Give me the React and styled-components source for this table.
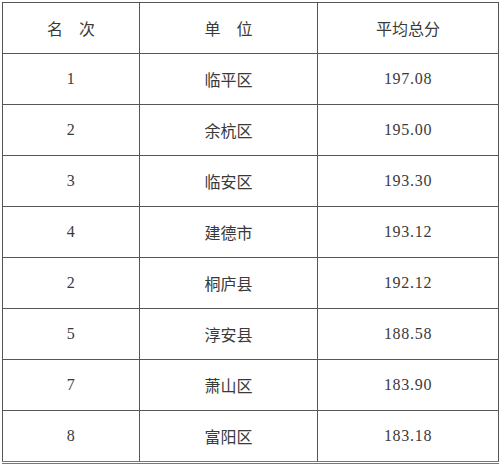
import styled, {createGlobalStyle} from "styled-components";

const rows = [
  ["1", "临平区", "197.08"],
  ["2", "余杭区", "195.00"],
  ["3", "临安区", "193.30"],
  ["4", "建德市", "193.12"],
  ["2", "桐庐县", "192.12"],
  ["5", "淳安县", "188.58"],
  ["7", "萧山区", "183.90"],
  ["8", "富阳区", "183.18"],
];

export default function App() {
  return (
    <>
      <GlobalStyle />
      <Page>
        <Table>
          <colgroup>
            <col style={{width: 137}} />
            <col style={{width: 178}} />
            <col style={{width: 181}} />
          </colgroup>
          <thead>
            <tr>
              <HeadCell>名　次</HeadCell>
              <HeadCell>单　位</HeadCell>
              <HeadCell>平均总分</HeadCell>
            </tr>
          </thead>
          <tbody>
            {rows.map(([rank, unit, score], i) => (
              <tr key={i}>
                <Cell $num>{rank}</Cell>
                <Cell>{unit}</Cell>
                <Cell $num>{score}</Cell>
              </tr>
            ))}
          </tbody>
        </Table>
      </Page>
    </>
  );
}

const GlobalStyle = createGlobalStyle`
  html, body {
    margin: 0;
    background: #fff;
  }
`;

const Page = styled.div`
  width: 500px;
  height: 464px;
  padding: 2px 0 0 2px;
  box-sizing: border-box;
  background: #fff;
`;

const Table = styled.table`
  border-collapse: collapse;
  table-layout: fixed;
  width: 497px;
  border-bottom: 3px double #777;
`;

const HeadCell = styled.th`
  height: 50px;
  padding: 0;
  font-family: "Noto Sans CJK SC", sans-serif;
  font-size: 16px;
  font-weight: normal;
  color: #3a3a3a;
  text-align: center;
  border: 1px solid #555;
`;

const Cell = styled.td`
  height: 50px;
  padding: 0;
  font-family: ${p =>
    p.$num
      ? '"Liberation Serif", "Times New Roman", serif'
      : '"Noto Sans CJK SC", sans-serif'};
  font-size: 16px;
  color: #3a3a3a;
  text-align: center;
  border: 1px solid #555;
  letter-spacing: ${p => (p.$num ? "0.7px" : "0")};
`;
